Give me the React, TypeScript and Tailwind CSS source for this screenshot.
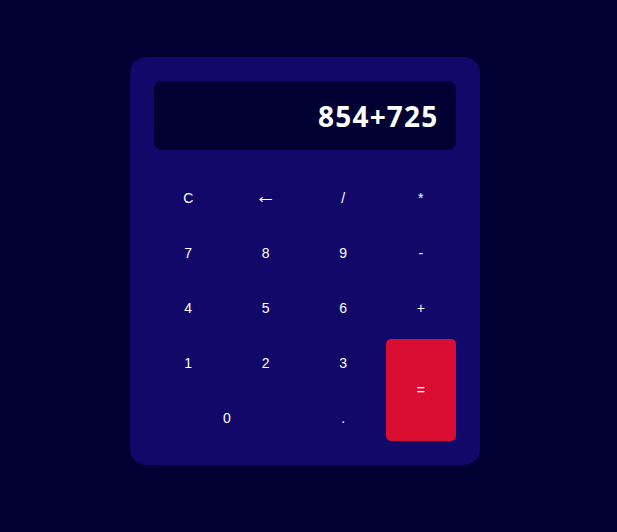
const keys: { label: string; className?: string }[] = [
  { label: "C" },
  { label: "←", className: "text-[21px] leading-none pb-[5px]" },
  { label: "/" },
  { label: "*" },
  { label: "7" },
  { label: "8" },
  { label: "9" },
  { label: "-" },
  { label: "4" },
  { label: "5" },
  { label: "6" },
  { label: "+" },
  { label: "1" },
  { label: "2" },
  { label: "3" },
  { label: "=", className: "row-span-2 rounded-[5px] bg-[#da0e32]" },
  { label: "0", className: "col-span-2" },
  { label: "." },
]

export default function App() {
  return (
    <div className="min-h-screen bg-[#000033] pt-[57px] pr-[8px] flex justify-center items-start font-['Liberation_Sans',Arial,sans-serif]">
      <div className="w-[350px] rounded-2xl bg-[#12086a] p-6">
        <div className="h-[69px] rounded-lg bg-[#000033] pr-[17px] flex items-center justify-end">
          <span className="text-[28px] font-bold tracking-[1.2px] text-white font-['Open_Sans',sans-serif] leading-none">
            854+725
          </span>
        </div>

        <div className="mt-6 grid grid-cols-4 auto-rows-[47px] gap-2">
          {keys.map((k) => (
            <button
              key={k.label}
              className={`flex items-center justify-center text-sm text-white ${k.className ?? ""}`}
            >
              {k.label}
            </button>
          ))}
        </div>
      </div>
    </div>
  )
}
